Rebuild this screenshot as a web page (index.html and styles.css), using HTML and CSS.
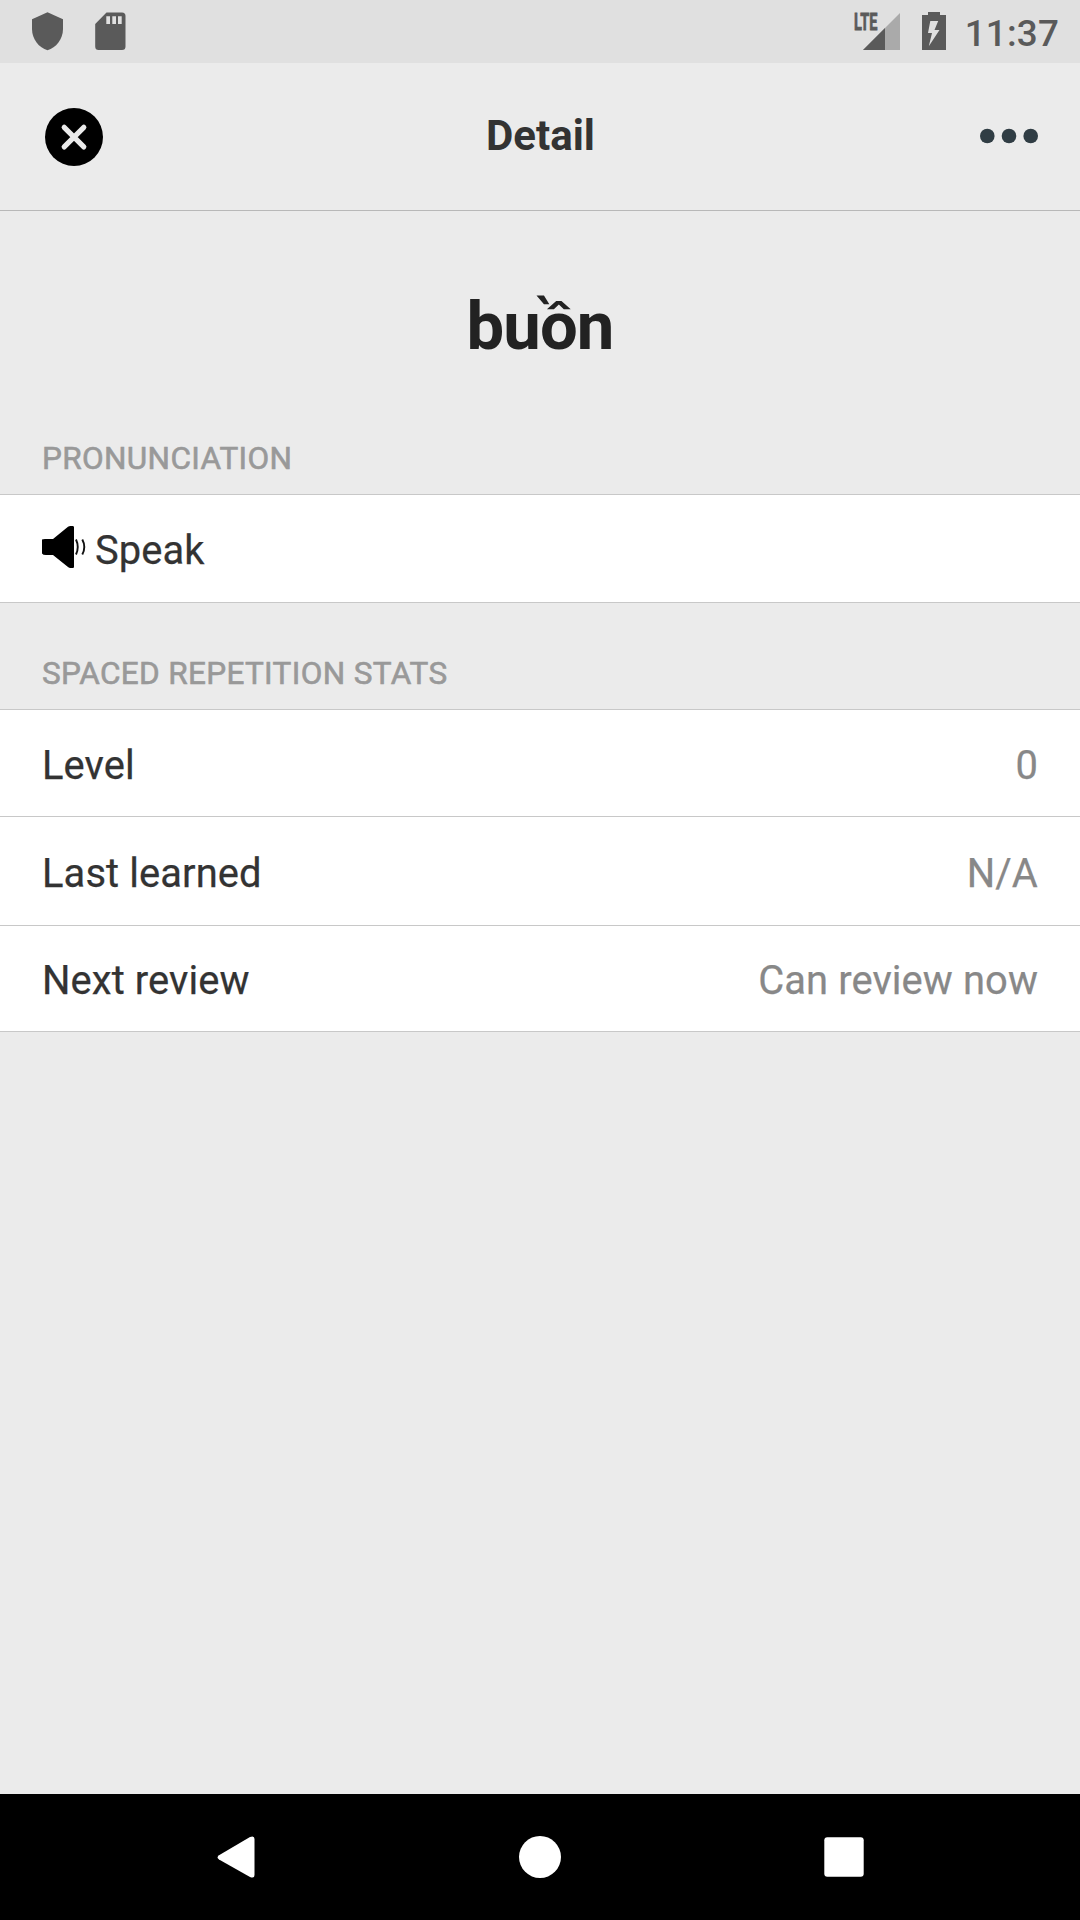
FILE: index.html
```html
<!DOCTYPE html>
<html lang="en">
<head>
<meta charset="utf-8">
<title>Detail</title>
<link rel="stylesheet" href="styles.css">
</head>
<body>
<div class="screen">
  <div class="status-bar">
    <div class="status-group">
      <svg class="icon-shield" width="32" height="39" viewBox="0 0 32 39"><path d="M15.5 0.3L31 7.2V17C31 27 24 36 15.5 38.2C7 36 0 27 0 17V7.2Z" fill="#5a5a5a"/></svg>
      <svg width="31" height="39" viewBox="0 0 31 39"><path fill-rule="evenodd" d="M11.5 .5H27Q30.5 .5 30.5 4V34.500Q30.500 38 27 38H3.600Q.2 38 .2 34.500V12ZM11.300 4.300V12H15V4.300ZM17.300 4.300V12H21V4.300ZM23 4.300V12H26.700V4.300Z" fill="#5a5a5a"/></svg>
    </div>
    <div class="status-group">
      <div class="signal">
        <svg width="46" height="37" viewBox="0 0 46 37"><path d="M46 0V37H9Z" fill="#aaa"/><path d="M31 15V37H9Z" fill="#5a5a5a"/></svg>
        <span class="signal-type">LTE</span>
      </div>
      <svg class="icon-battery" width="24" height="38" viewBox="0 0 24 38"><path fill-rule="evenodd" d="M6 0H18V3H24V38H0V3H6ZM8.300 9H16.200L12.500 18H17.500L6.800 34.200L10 21H6Z" fill="#5a5a5a"/></svg>
      <span class="clock">11:37</span>
    </div>
  </div>

  <header class="app-bar">
    <svg width="58" height="58" viewBox="0 0 58 58"><circle cx="29" cy="29" r="29" fill="#000"/><path d="M19.200 19.300L38.800 38.900M38.800 19.300L19.200 38.900" stroke="#ebebeb" stroke-width="5.200" stroke-linecap="round"/></svg>
    <h1 class="title">Detail</h1>
    <svg class="more" width="58" height="16" viewBox="0 0 58 16" fill="#303d44"><circle cx="7.300" cy="8" r="7.300"/><circle cx="29" cy="8" r="7.300"/><circle cx="50.700" cy="8" r="7.300"/></svg>
  </header>

  <main class="content">
    <h2 class="word">buồn</h2>
    <h3 class="section-title">PRONUNCIATION</h3>
    <div class="list">
      <div class="row row-speak">
        <svg class="icon-speaker" width="44" height="43" viewBox="0 0 44 43"><path d="M0 13.500Q1 13 3 13H11L26 .8Q27 0 28.500 0H31Q32 .2 32 1.500V40.500Q32 42 31 42H28.500Q27 42 26 41L11 29H4Q1 29 0 27.500Z"/><path d="M34 13.500Q37.500 21 34 28.500M40.300 13.500Q44.300 21 40.300 28.500" fill="none" stroke="#111" stroke-width="1.900"/></svg>
        <span>Speak</span>
      </div>
    </div>
    <h3 class="section-title">SPACED REPETITION STATS</h3>
    <div class="list">
      <div class="row row-level"><span>Level</span><span class="value">0</span></div>
      <div class="row row-learned"><span>Last learned</span><span class="value">N/A</span></div>
      <div class="row row-review"><span>Next review</span><span class="value">Can review now</span></div>
    </div>
  </main>

  <nav class="nav-bar">
    <svg width="42" height="42" viewBox="0 0 42 42"><path d="M3 19.300L34 1Q38.500-.8 38.500 3V39Q38.500 42.800 34 41L3 23.400Q.2 21.400 3 19.300Z" fill="#fff"/></svg>
    <svg width="42" height="42" viewBox="0 0 42 42"><circle cx="21" cy="21" r="21" fill="#fff"/></svg>
    <svg width="42" height="42" viewBox="0 0 42 42"><rect x="2.300" y="1.300" width="39.400" height="39.400" rx="3" fill="#fff"/></svg>
  </nav>
</div>
</body>
</html>
```
FILE: styles.css
```css
* { box-sizing: border-box; margin: 0; }
body { font-family: Roboto, sans-serif; color: #333; background: #ebebeb; }
svg { display: block; flex: none; }
.screen { width: 1080px; height: 1920px; display: flex; flex-direction: column; }

.status-bar {
  height: 63px;
  background: #e0e0e0;
  display: flex;
  justify-content: space-between;
  padding: 12px 21px 0 32px;
}
.status-group { display: flex; align-items: flex-start; }
.icon-shield { margin-right: 31px; }
.signal { position: relative; padding-top: 1px; }
.signal-type {
  position: absolute;
  left: 0;
  top: 1px;
  font-size: 23px;
  line-height: 20px;
  font-weight: 700;
  color: #5a5a5a;
  -webkit-text-stroke: .8px #5a5a5a;
  transform: scaleX(.63);
  transform-origin: left;
}
.icon-battery { margin: 0 19px 0 22px; }
.clock { font-size: 36.75px; font-weight: 500; line-height: 43px; letter-spacing: .2px; color: #5a5a5a; }

.app-bar {
  height: 148px;
  border-bottom: 1px solid #b8b8b8;
  display: flex;
  justify-content: space-between;
  align-items: flex-start;
  padding: 45px 42px 0 45px;
}
.title { font-size: 42px; line-height: 56px; font-weight: 700; margin-right: 2px; }
.more { margin-top: 20px; }

.content { flex: 1; }
.word {
  height: 199px;
  padding-top: 76px;
  font-size: 67px;
  line-height: 79px;
  font-weight: 700;
  letter-spacing: -.9px;
  text-align: center;
  color: #222;
}
.section-title {
  height: 84px;
  padding: 30px 42px 0;
  font-size: 31.5px;
  line-height: 38px;
  font-weight: 400;
  -webkit-text-stroke: .6px #999;
  letter-spacing: .35px;
  color: #999;
}
.list + .section-title { height: 106px; padding-top: 52px; }
.list { border-top: 1px solid #c8c8c8; background: #fff; }
.row {
  display: flex;
  justify-content: space-between;
  border-bottom: 1px solid #c8c8c8;
  padding: 31px 42px 0;
  font-size: 39.9px;
  line-height: 50px;
  letter-spacing: .1px;
  -webkit-text-stroke: .25px currentColor;
}
.row-speak { height: 108px; justify-content: flex-start; }
.icon-speaker { margin: 0 9px 0 0; }
.row-level { height: 107px; }
.row-learned { height: 109px; padding-top: 32px; }
.row-review { height: 106px; padding-top: 30px; }
.value { color: #888; }

.nav-bar {
  height: 126px;
  background: #000;
  display: flex;
  justify-content: space-between;
  align-items: center;
  padding: 0 216px;
}
```
